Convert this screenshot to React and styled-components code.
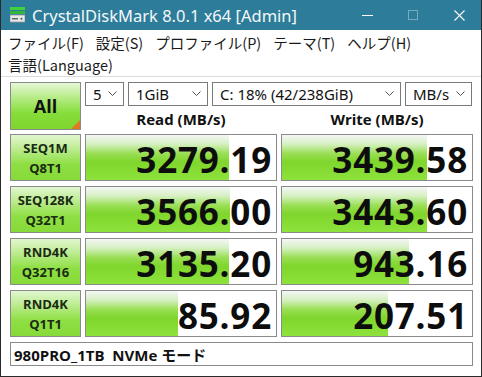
import React from "react";
import styled, { createGlobalStyle } from "styled-components";

const Global = createGlobalStyle`
  html, body { margin: 0; padding: 0; background: #fff; }
  * { box-sizing: border-box; }
`;

const Window = styled.div`
  width: 482px;
  height: 377px;
  border: 1px solid #2a2a2a;
  border-top: none;
  display: flex;
  flex-direction: column;
  background: #fff;
  font-family: "Noto Sans", "Noto Sans CJK JP", sans-serif;
  overflow: hidden;
`;

const TitleBar = styled.div`
  height: 30px;
  background: #2d7c99;
  display: flex;
  align-items: center;
  color: #fff;
  margin: 0 -1px;
  padding-left: 10px;
`;

const Title = styled.span`
  font-family: "Noto Sans", sans-serif;
  font-size: 16.5px;
  margin-left: 7px;
  color: #f4f8fa;
  flex: 1;
  white-space: nowrap;
`;

const Ctrl = styled.div`
  width: 46px;
  height: 30px;
  display: flex;
  align-items: center;
  justify-content: center;
  opacity: ${(p) => (p.$dim ? 0.35 : 1)};
`;

const MenuBar = styled.div`
  display: flex;
  flex-wrap: wrap;
  column-gap: 12px;
  padding: 2px 7px 0;
  font-family: "Noto Sans CJK JP", sans-serif;
  font-size: 14.5px;
  line-height: 22px;
  color: #1a1a1a;
  border-bottom: 1px solid #dcdcdc;
  height: 47px;
`;

const Main = styled.div`
  flex: 1;
  padding: 5px 8px 0 9px;
  display: grid;
  grid-template-columns: 71px 192px 192px;
  grid-auto-rows: 47px;
  column-gap: 4px;
  row-gap: 5px;
  align-content: start;
`;

const AllButton = styled.div`
  height: 48px;
  border: 1px solid #8a8a8a;
  background: linear-gradient(#e6f8d6 0%, #b9ec8c 30%, #86dd3a 65%, #7fd62e 100%);
  display: flex;
  align-items: center;
  justify-content: center;
  font-family: "Open Sans", sans-serif;
  font-weight: 700;
  font-size: 18px;
  color: #111;
  position: relative;
  &::after {
    content: "";
    position: absolute;
    right: 0;
    bottom: 0;
    border-style: solid;
    border-width: 0 0 9px 9px;
    border-color: transparent transparent #e07a20 transparent;
  }
`;

const TopRight = styled.div`
  grid-column: 2 / 4;
  display: flex;
  flex-direction: column;
  height: 48px;
`;

const Selects = styled.div`
  display: flex;
  gap: 4px;
  height: 24px;
`;

const Select = styled.div`
  width: ${(p) => p.$w}px;
  height: 24px;
  border: 1px solid #7a7a7a;
  background: #fff;
  display: flex;
  align-items: center;
  padding: 0 6px 0 7px;
  font-family: "Noto Sans", sans-serif;
  font-size: 15px;
  color: #111;
  white-space: nowrap;
  span { flex: 1; overflow: hidden; }
`;

const Headers = styled.div`
  display: grid;
  grid-template-columns: 192px 192px;
  column-gap: 4px;
  flex: 1;
  align-items: center;
`;

const Header = styled.div`
  text-align: center;
  font-family: "Open Sans", sans-serif;
  font-weight: 700;
  font-size: 15px;
  color: #111;
  padding-top: 1px;
`;

const Label = styled.div`
  border: 1px solid #8a8a8a;
  background: linear-gradient(#e2f6d0 0%, #bdec92 30%, #8fdf44 65%, #86da38 100%);
  display: flex;
  flex-direction: column;
  align-items: center;
  justify-content: center;
  font-family: "Open Sans", sans-serif;
  font-weight: 700;
  font-size: 13px;
  line-height: 20px;
  color: #1b2a12;
`;

const Cell = styled.div`
  position: relative;
  border: 1px solid #8a8a8a;
  background: #fff;
  display: flex;
  align-items: center;
  justify-content: flex-end;
  padding: 3px 4px 0 0;
  overflow: hidden;
`;

const Fill = styled.div`
  position: absolute;
  left: 0;
  top: 0;
  bottom: 0;
  background: linear-gradient(#f6f6f6 0%, #d6f0c2 20%, #98de52 42%, #7fd62c 60%, #8ee23c 100%);
`;

const Value = styled.span`
  position: relative;
  font-family: "Open Sans", sans-serif;
  font-weight: 700;
  font-size: 35px;
  letter-spacing: 0.8px;
  color: #0d0d0d;
  line-height: 1;
`;

const Comment = styled.div`
  grid-column: 1 / 4;
  height: 24px;
  border: 1px solid #8a8a8a;
  display: flex;
  align-items: center;
  padding-left: 3px;
  font-family: "Open Sans", "Noto Sans CJK JP", sans-serif;
  font-weight: 700;
  font-size: 15px;
  color: #111;
  white-space: pre;
`;

const Chevron = () => (
  <svg width="9" height="6" viewBox="0 0 9 6">
    <polyline points="0.5,0.5 4.5,4.5 8.5,0.5" fill="none" stroke="#555" strokeWidth="1" />
  </svg>
);

const AppIcon = () => (
  <svg width="15" height="16" viewBox="0 0 15 16">
    <rect x="0" y="0" width="15" height="3" fill="#3fd23f" />
    <rect x="0" y="4" width="15" height="3" fill="#2fb83a" />
    <rect x="0" y="8" width="15" height="7" fill="#e8e8e8" stroke="#9a9a9a" strokeWidth="0.8" />
    <rect x="2" y="11" width="6" height="1.5" fill="#666" />
    <circle cx="11.5" cy="11.8" r="1" fill="#4a4a4a" />
  </svg>
);

const rows = [
  { l1: "SEQ1M", l2: "Q8T1", r: "3279.19", rw: 143, w: "3439.58", ww: 145 },
  { l1: "SEQ128K", l2: "Q32T1", r: "3566.00", rw: 144, w: "3443.60", ww: 145 },
  { l1: "RND4K", l2: "Q32T16", r: "3135.20", rw: 143, w: "943.16", ww: 127 },
  { l1: "RND4K", l2: "Q1T1", r: "85.92", rw: 92, w: "207.51", ww: 106 },
];

export default function App() {
  return (
    <>
      <Global />
      <Window>
        <TitleBar>
          <AppIcon />
          <Title>CrystalDiskMark 8.0.1 x64 [Admin]</Title>
          <Ctrl>
            <svg width="11" height="11" viewBox="0 0 11 11">
              <line x1="0" y1="5.5" x2="11" y2="5.5" stroke="#fff" strokeWidth="1" />
            </svg>
          </Ctrl>
          <Ctrl $dim>
            <svg width="10" height="10" viewBox="0 0 10 10">
              <rect x="0.5" y="0.5" width="9" height="9" fill="none" stroke="#fff" strokeWidth="1" />
            </svg>
          </Ctrl>
          <Ctrl>
            <svg width="11" height="11" viewBox="0 0 11 11">
              <line x1="0.5" y1="0.5" x2="10.5" y2="10.5" stroke="#fff" strokeWidth="1.1" />
              <line x1="10.5" y1="0.5" x2="0.5" y2="10.5" stroke="#fff" strokeWidth="1.1" />
            </svg>
          </Ctrl>
        </TitleBar>
        <MenuBar>
          <span>ファイル(F)</span>
          <span>設定(S)</span>
          <span>プロファイル(P)</span>
          <span>テーマ(T)</span>
          <span>ヘルプ(H)</span>
          <span>言語(Language)</span>
        </MenuBar>
        <Main>
          <AllButton>All</AllButton>
          <TopRight>
            <Selects>
              <Select $w={39}><span>5</span><Chevron /></Select>
              <Select $w={80}><span>1GiB</span><Chevron /></Select>
              <Select $w={189}><span>C: 18% (42/238GiB)</span><Chevron /></Select>
              <Select $w={67}><span>MB/s</span><Chevron /></Select>
            </Selects>
            <Headers>
              <Header>Read (MB/s)</Header>
              <Header>Write (MB/s)</Header>
            </Headers>
          </TopRight>
          {rows.map((r, i) => (
            <React.Fragment key={i}>
              <Label>
                <span>{r.l1}</span>
                <span>{r.l2}</span>
              </Label>
              <Cell>
                <Fill style={{ width: r.rw }} />
                <Value>{r.r}</Value>
              </Cell>
              <Cell>
                <Fill style={{ width: r.ww }} />
                <Value>{r.w}</Value>
              </Cell>
            </React.Fragment>
          ))}
          <Comment>{"980PRO_1TB  NVMe モード"}</Comment>
        </Main>
      </Window>
    </>
  );
}
